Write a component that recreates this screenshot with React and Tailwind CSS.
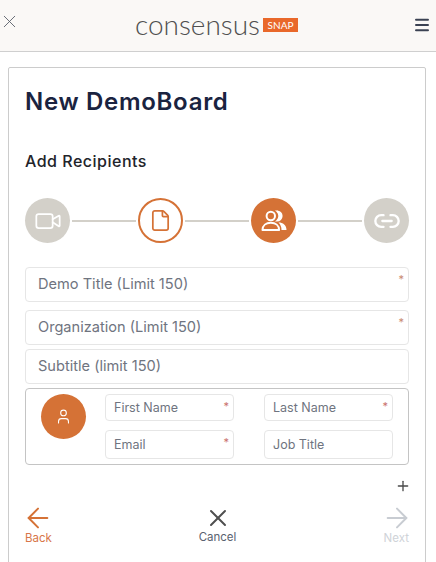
import React from 'react';
import { X, Menu, Plus, ArrowLeft, ArrowRight, Video, File, Link2, User } from 'lucide-react';

const font = "font-['Inter','Noto_Sans',sans-serif]";

// two people, the one behind is a filled shape
const PeopleIcon = () => (
  <svg width="26" height="24" viewBox="0 0 26 24" fill="none">
    <path d="M16 2.200a4.800 4.800 0 0 1 0 9.600 6.500 6.500 0 0 0 0-9.600Z" fill="white" stroke="white" strokeWidth="1.600" />
    <circle cx="9.800" cy="7" r="4.200" stroke="white" strokeWidth="2" />
    <path d="M1.500 21c0-4.600 3.600-7.200 8.300-7.200s8.300 2.600 8.300 7.200H1.500Z" stroke="white" strokeWidth="2" strokeLinejoin="round" />
    <path d="M17.500 13.500c4.500 0 8 2.600 8 7.500h-5c0-3-1-5.500-3-7.500Z" fill="white" />
  </svg>
);

const Step = ({ kind, children }) => {
  const styles = {
    done: 'bg-[#d3d0c9]',
    active: 'bg-white border-2 border-[#d57236]',
    current: 'bg-[#d57236]',
  };
  return <div className={`w-[45px] h-[45px] rounded-full flex items-center justify-center shrink-0 ${styles[kind]}`}>{children}</div>;
};

const Line = () => <div className="flex-1 h-[2px] mx-[2px] bg-[#d3d0c9]" />;

const Field = ({ label, required, className }) => (
  <div className={`relative flex items-center border border-[#e6e6e6] rounded-[4px] bg-white px-3 text-[14.6px] text-[#6f7480] ${className}`}>
    {label}
    {required && <span className="absolute right-[4px] top-[3px] text-[11px] text-[#c98a6e]">*</span>}
  </div>
);

const SmallField = ({ label, required, className }) => (
  <div className={`relative flex items-center border border-[#e6e6e6] rounded-[4px] bg-white px-2 pt-[2px] text-[12.5px] text-[#6f7480] ${className}`}>
    {label}
    {required && <span className="absolute right-[4px] top-[3px] text-[11px] text-[#c9706a]">*</span>}
  </div>
);

export default function App() {
  return (
    <div className={`w-[436px] h-[562px] overflow-hidden bg-white ${font}`}>
      {/* header */}
      <div className="h-[52px] bg-[#faf8f6] border-b border-[#cfcfcf] flex items-center justify-between pr-[5px]">
        <X size={21} strokeWidth={1} className="text-[#555b66] -ml-[1px] mb-[8px]" />
        <div className="flex items-center mb-[3px]">
          <span className="font-['Lato',sans-serif] font-light text-[28px] leading-none text-[#4f4f4f]">consensus</span>
          <span className="ml-[3px] mt-[1px] w-[35px] h-[14px] bg-[#e9682a] text-white text-[10px] leading-[14px] text-center font-['Lato',sans-serif]">SNAP</span>
        </div>
        <Menu size={18} strokeWidth={2.6} className="text-[#3a4152] mb-[1px]" />
      </div>

      {/* card */}
      <div className="ml-2 w-[418px] mt-[15px] h-[520px] border border-[#cccccc] rounded-[2px] px-4">
        <h1 className="mt-[18px] text-[24px] leading-[32px] font-semibold tracking-[0.7px] text-[#1a2340]">New DemoBoard</h1>
        <h2 className="mt-[31px] text-[16px] leading-[24px] font-medium tracking-[0.5px] text-[#22242a]">Add Recipients</h2>

        <div className="mt-[25px] flex items-center">
          <Step kind="done"><Video size={28} strokeWidth={1.5} className="text-white" /></Step>
          <Line />
          <Step kind="active"><File size={23} strokeWidth={1.8} className="text-[#d57236]" /></Step>
          <Line />
          <Step kind="current"><PeopleIcon /></Step>
          <Line />
          <Step kind="done"><Link2 size={28} strokeWidth={2} className="text-white" /></Step>
        </div>

        <Field label="Demo Title (Limit 150)" required className="mt-6 h-[35px]" />
        <Field label="Organization (Limit 150)" required className="mt-2 h-[35px]" />
        <Field label="Subtitle (limit 150)" className="mt-1 h-[35px]" />

        <div className="mt-1 h-[77px] border border-[#c4c4c4] rounded-[4px] flex pl-[15px] pt-[5px]">
          <div className="w-[45px] h-[45px] rounded-full bg-[#d57236] flex items-center justify-center shrink-0">
            <User size={17} strokeWidth={1.5} className="text-white" />
          </div>
          <div className="ml-[19px] grid grid-cols-[129px_129px] gap-x-[30px] gap-y-[9px] content-start">
            <SmallField label="First Name" required className="h-[27px]" />
            <SmallField label="Last Name" required className="h-[27px]" />
            <SmallField label="Email" required className="h-[29px]" />
            <SmallField label="Job Title" className="h-[29px]" />
          </div>
        </div>

        <div className="mt-[13px] flex justify-end">
          <Plus size={16} strokeWidth={2} className="text-[#4a4a4a] -mr-[2px]" />
        </div>

        <div className="mt-[8px] flex justify-between items-start text-[11.5px] leading-[14px]">
          <div className="flex flex-col items-start text-[#d8764a]">
            <ArrowLeft size={32} strokeWidth={1.5} className="text-[#d57236] -ml-[3px]" />
            <span className="-mt-[3px]">Back</span>
          </div>
          <div className="flex flex-col items-center text-[#5a6270]">
            <X size={28} strokeWidth={1.7} className="text-[#4f4f4f] mt-[2px]" />
            <span className="-mt-[2px]">Cancel</span>
          </div>
          <div className="flex flex-col items-end text-[#cfd3d8]">
            <ArrowRight size={32} strokeWidth={1.5} className="text-[#c8ccd2] -mr-[4px]" />
            <span className="-mt-[3px]">Next</span>
          </div>
        </div>
      </div>
    </div>
  );
}
